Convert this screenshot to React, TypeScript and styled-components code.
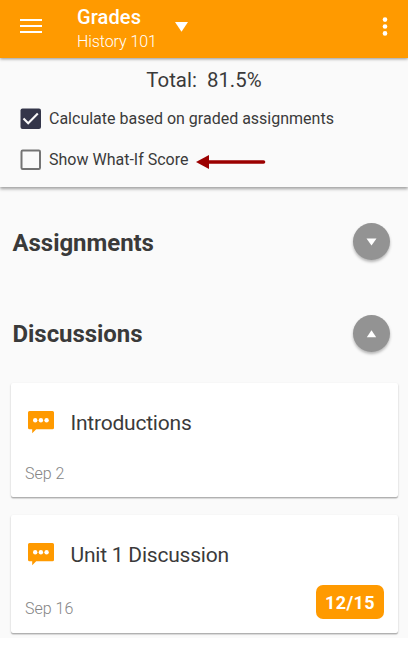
import React from "react";
import styled, { createGlobalStyle } from "styled-components";

const GlobalStyle = createGlobalStyle`
  * { box-sizing: border-box; }
  body { margin: 0; background: #fff; font-family: Roboto, "Liberation Sans", sans-serif; color: #3a3a3a; }
`;

const Screen = styled.main`
  width: 408px;
  height: 638px;
  background: #fafafa;
  overflow: hidden;
`;

const AppBar = styled.header`
  position: relative;
  z-index: 1;
  height: 58px;
  display: flex;
  align-items: flex-start;
  padding-left: 20px;
  background: #ff9a00;
  color: #fff;
  box-shadow: 0 1px 3px rgba(0, 0, 0, 0.42);

  svg { display: block; }
`;

const MenuIcon = styled.svg`
  width: 22px;
  height: 15px;
  margin: 19px 35px 0 0;
`;

const Heading = styled.div`
  width: 98px;
  padding-top: 5px;
`;

const Title = styled.h1`
  margin: 0;
  font-size: 20px;
  line-height: 24px;
  font-weight: 500;
  letter-spacing: 0.12px;
`;

const Course = styled.div`
  font-size: 16px;
  line-height: 26px;
  font-weight: 300;
  letter-spacing: -0.08px;
`;

const CourseArrow = styled.svg`
  width: 13px;
  height: 10px;
  margin-top: 22px;
`;

const MoreIcon = styled.svg`
  width: 6px;
  height: 20px;
  margin: 17px 20px 0 auto;
`;

const Summary = styled.section`
  height: 129px;
  padding: 10px 0 0 20px;
  background: #fafafa;
  box-shadow: 0 2px 3px rgba(0, 0, 0, 0.36);
`;

const Total = styled.div`
  height: 24px;
  margin-left: -20px;
  text-align: center;
  white-space: pre;
  font-size: 20.4px;
  line-height: 25px;
`;

const Option = styled.div<{ $top: number }>`
  display: flex;
  align-items: center;
  height: 22px;
  margin-top: ${({ $top }) => $top}px;
  font-size: 16px;

  svg { display: block; flex: none; }
`;

const OptionLabel = styled.span`
  margin-left: 8px;
  line-height: 22px;
  white-space: nowrap;
`;

const Pointer = styled.svg`
  width: 71px;
  height: 14px;
  margin: 3px 0 0 8px;
`;

const GroupHeader = styled.div<{ $top: number }>`
  display: flex;
  align-items: center;
  justify-content: space-between;
  height: 37px;
  margin-top: ${({ $top }) => $top}px;
  padding: 0 18px 0 12.5px;
`;

const GroupTitle = styled.h2<{ $top: number }>`
  margin: ${({ $top }) => $top}px 0 0;
  font-size: 24px;
  line-height: 28px;
  font-weight: 700;
  letter-spacing: -0.05px;
`;

const Toggle = styled.button`
  display: flex;
  align-items: center;
  justify-content: center;
  width: 37px;
  height: 37px;
  padding: 0;
  border: 0;
  border-radius: 50%;
  background: #939393;
  box-shadow: 0 2px 3px rgba(0, 0, 0, 0.28);
`;

const CardList = styled.div`
  display: flex;
  flex-direction: column;
  gap: 18px;
  padding: 31px 10px 0 11px;
`;

const Card = styled.article<{ $height: number; $bottom: number }>`
  display: flex;
  flex-direction: column;
  justify-content: space-between;
  height: ${({ $height }) => $height}px;
  padding: 27px 14px ${({ $bottom }) => $bottom}px;
  border-radius: 2px;
  background: #fff;
  box-shadow: 0 1px 2px rgba(0, 0, 0, 0.25), 0 1.5px 0.5px rgba(0, 0, 0, 0.13);
`;

const CardTop = styled.div`
  display: flex;
  height: 28px;
  padding-left: 3px;
`;

const ChatIcon = styled.svg`
  width: 26px;
  height: 23px;
  margin: 1px 16.5px 0 0;
`;

const CardTitle = styled.div`
  font-size: 21px;
  line-height: 27px;
  letter-spacing: -0.22px;
`;

const CardBottom = styled.div`
  display: flex;
  justify-content: space-between;
  align-items: flex-end;
`;

const DateText = styled.div`
  font-size: 16px;
  line-height: 20px;
  font-weight: 300;
  color: #858585;
`;

const Score = styled.div`
  width: 68px;
  height: 34px;
  border-radius: 7px;
  background: #ff9a00;
  color: #fff;
  font-size: 18px;
  font-weight: 700;
  line-height: 35px;
  letter-spacing: 0.4px;
  text-align: center;
`;

const Checkbox = ({ checked = false }: { checked?: boolean }) => (
  <svg width="21" height="22" viewBox="0 0 21 22">
    {checked ? (
      <>
        <rect x="0.5" y="0.5" width="20.5" height="20.5" rx="2" fill="#34364a" />
        <path d="M3.5 10.5l4.7 4.7L17.8 5.6" fill="none" stroke="#fafafa" strokeWidth="2.1" />
      </>
    ) : (
      <rect x="1.5" y="1.5" width="18.5" height="18.5" rx="1.2" fill="none" stroke="#747474" strokeWidth="2" />
    )}
  </svg>
);

const GroupToggle = ({ open = false }: { open?: boolean }) => (
  <Toggle aria-label={open ? "Collapse" : "Expand"}>
    <svg width="11" height="8" viewBox="0 0 11 8">
      <path d={open ? "M.8 7.3h9.4L5.5.2z" : "M.5.5h10l-5 7z"} fill="#fff" />
    </svg>
  </Toggle>
);

const Chat = () => (
  <ChatIcon viewBox="0 0 26 23">
    <path d="M1.5 0h23Q26 0 26 1.5v15.3q0 1.5-1.5 1.5H8.2L4.2 22.3v-4H1.5Q0 18.3 0 16.8V1.5Q0 0 1.5 0z" fill="#ff9a00" />
    {[7.2, 12.9, 18.6].map((x) => (
      <circle key={x} cx={x} cy="9.3" r="2.2" fill="#fff" />
    ))}
  </ChatIcon>
);

export default function App() {
  return (
    <>
      <GlobalStyle />
      <Screen>
        <AppBar>
          <MenuIcon viewBox="0 0 22 15">
            <path d="M0 1h22M0 7h22M0 13h22" stroke="#fff" strokeWidth="2" />
          </MenuIcon>
          <Heading>
            <Title>Grades</Title>
            <Course>History 101</Course>
          </Heading>
          <CourseArrow viewBox="0 0 13 10">
            <path d="M0 0h13L6.5 9.7z" fill="#fff" />
          </CourseArrow>
          <MoreIcon viewBox="0 0 6 20">
            {[2.6, 9.5, 16.4].map((y) => (
              <circle key={y} cx="3" cy={y} r="2.3" fill="#fff" />
            ))}
          </MoreIcon>
        </AppBar>
        <Summary>
          <Total>{"Total:  81.5%"}</Total>
          <Option $top={16}>
            <Checkbox checked />
            <OptionLabel>Calculate based on graded assignments</OptionLabel>
          </Option>
          <Option $top={19}>
            <Checkbox />
            <OptionLabel>Show What-If Score</OptionLabel>
            <Pointer viewBox="0 0 71 14">
              <path d="M0 7L13 0v14z" fill="#9b0000" />
              <path d="M12 7h55.5" stroke="#9b0000" strokeWidth="3.6" strokeLinecap="round" />
            </Pointer>
          </Option>
        </Summary>
        <GroupHeader $top={36}>
          <GroupTitle $top={2}>Assignments</GroupTitle>
          <GroupToggle />
        </GroupHeader>
        <GroupHeader $top={55}>
          <GroupTitle $top={0}>Discussions</GroupTitle>
          <GroupToggle open />
        </GroupHeader>
        <CardList>
          <Card $height={114} $bottom={13}>
            <CardTop>
              <Chat />
              <CardTitle>Introductions</CardTitle>
            </CardTop>
            <CardBottom>
              <DateText>Sep 2</DateText>
            </CardBottom>
          </Card>
          <Card $height={118} $bottom={14}>
            <CardTop>
              <Chat />
              <CardTitle>Unit 1 Discussion</CardTitle>
            </CardTop>
            <CardBottom>
              <DateText>Sep 16</DateText>
              <Score>12/15</Score>
            </CardBottom>
          </Card>
        </CardList>
      </Screen>
    </>
  );
}
